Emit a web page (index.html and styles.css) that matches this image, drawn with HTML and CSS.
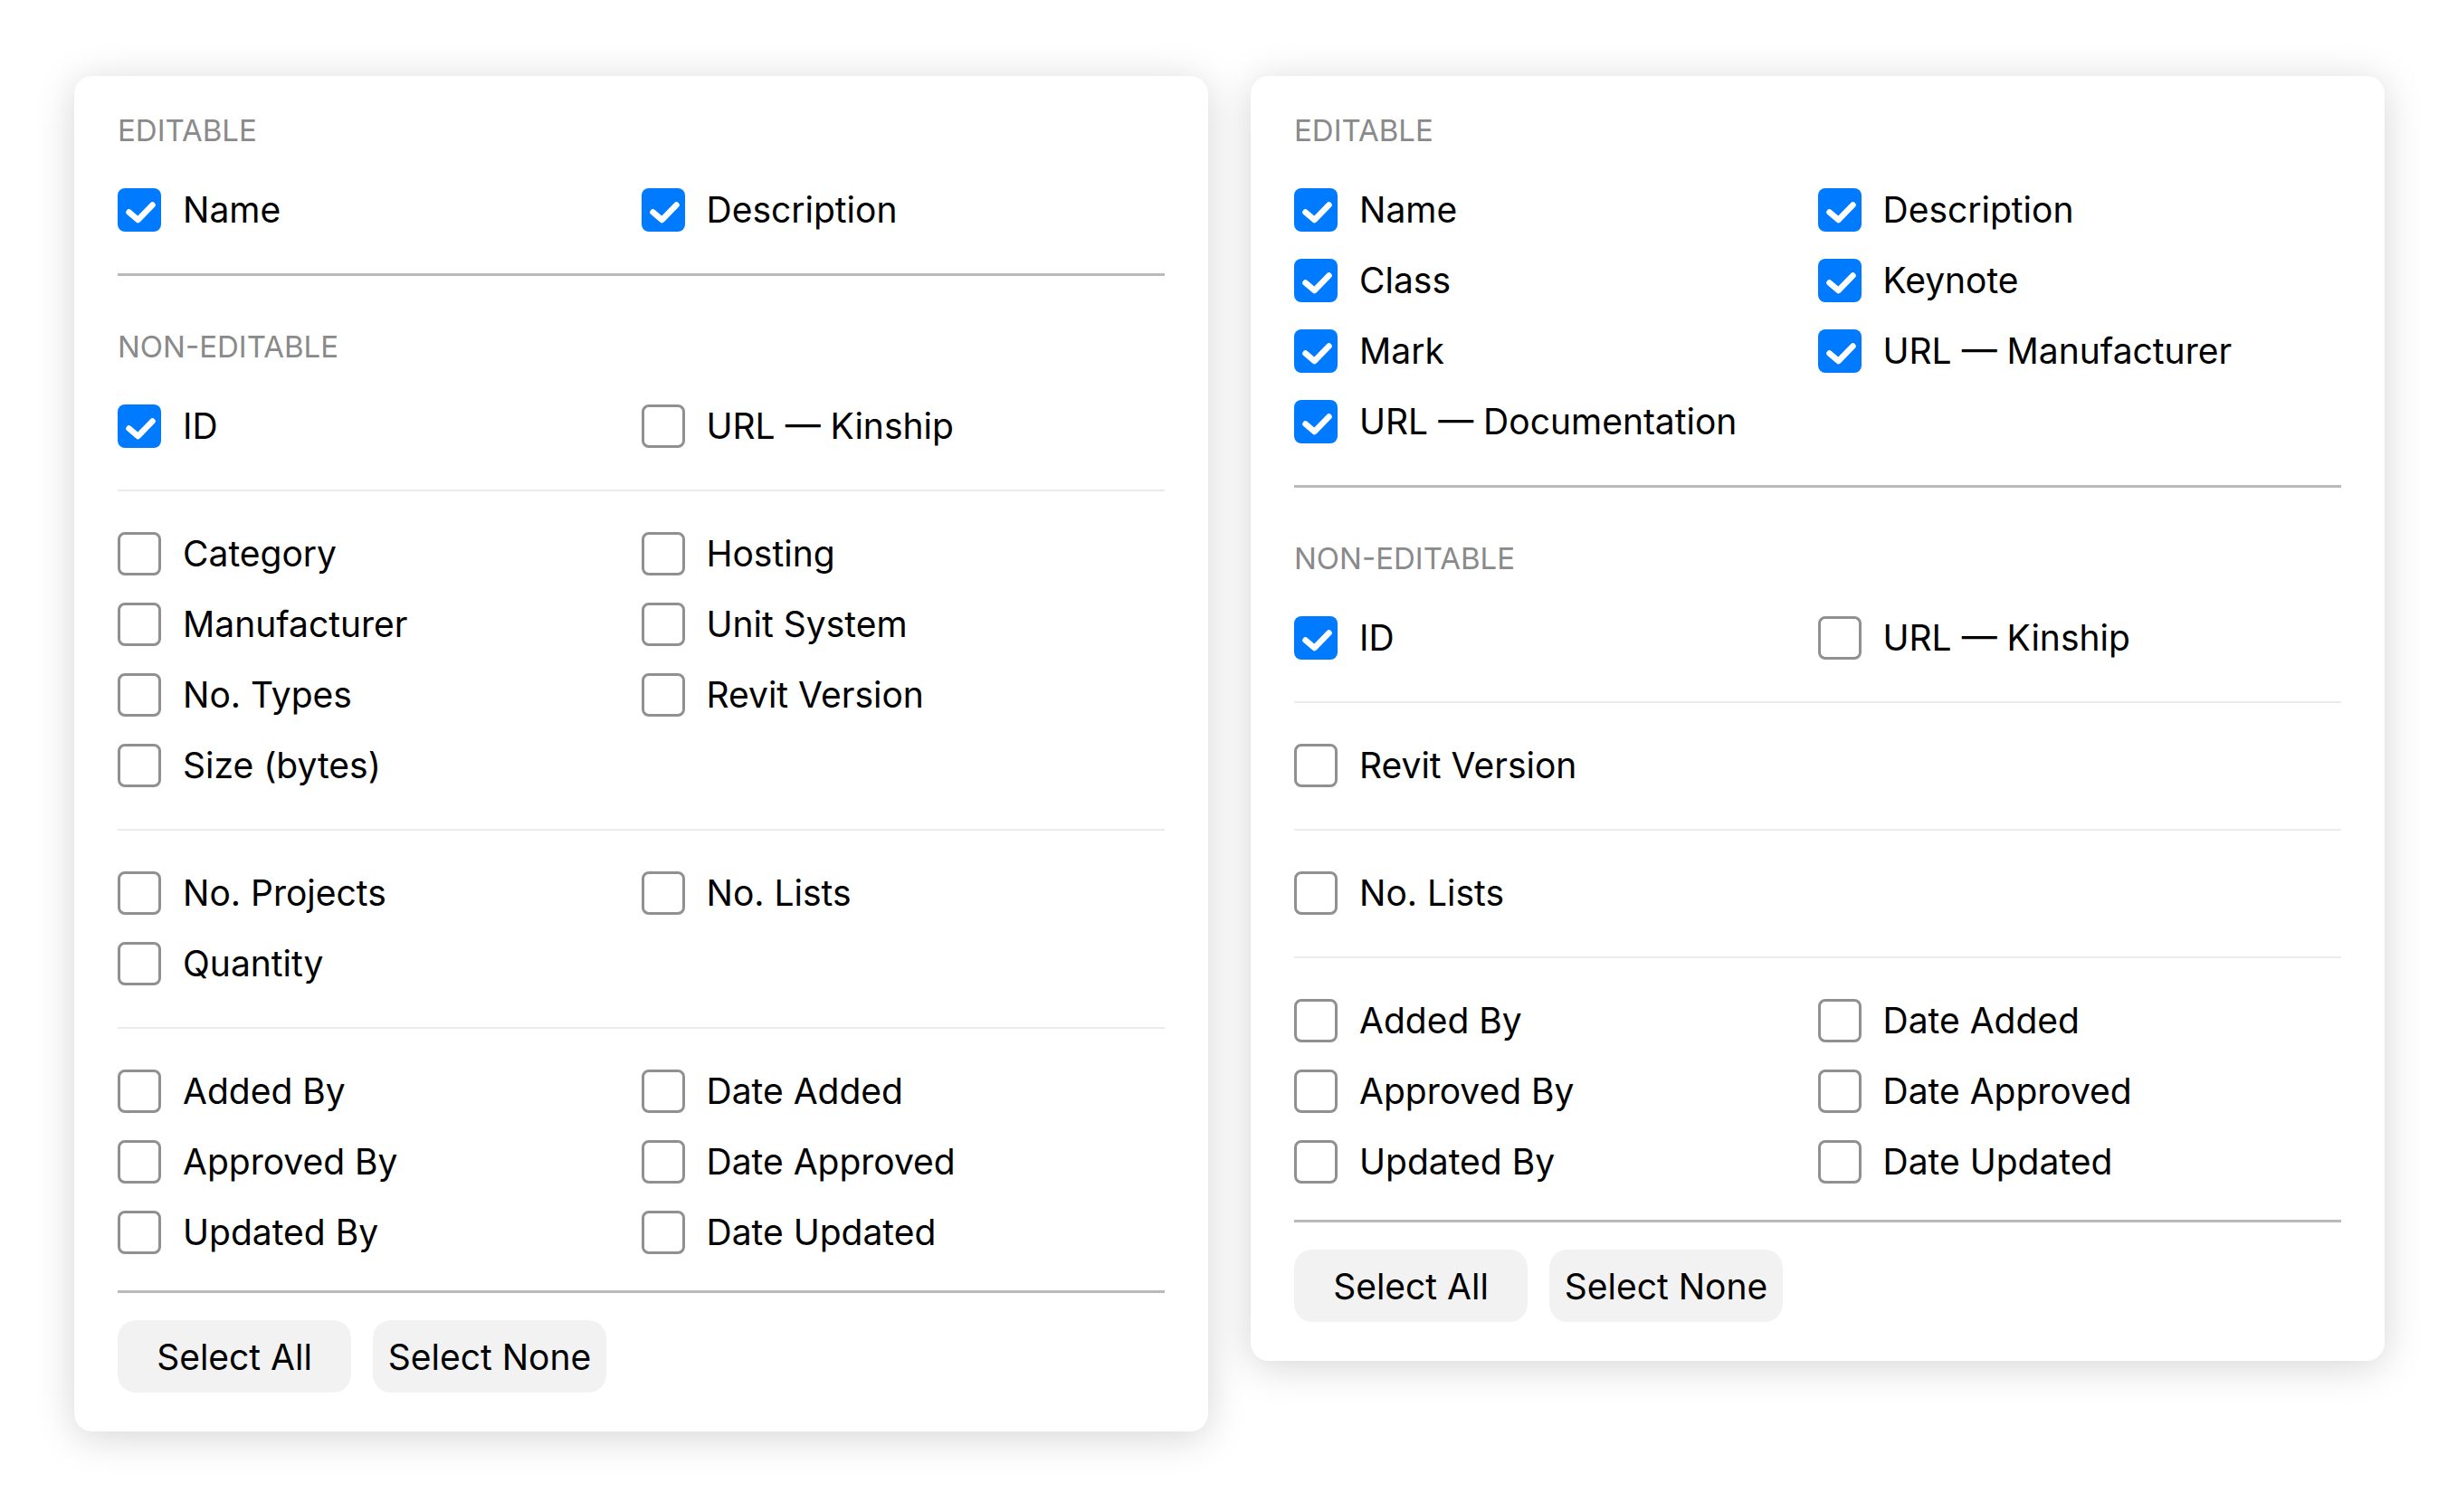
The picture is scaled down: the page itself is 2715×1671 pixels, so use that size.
FILE: index.html
```html
<!DOCTYPE html>
<html lang="en">
<head>
<meta charset="utf-8">
<title>Column chooser</title>
<link rel="stylesheet" href="styles.css">
</head>
<body>
<div class="page">
  <div class="card">
    <div class="section">
      <div class="section-label">EDITABLE</div>
      <div class="group">
        <div class="item"><span class="box checked"><svg viewBox="0 0 48 48"><polyline points="12.5,26.5 22.5,35 38.5,18.5"/></svg></span><span class="text">Name</span></div>
        <div class="item"><span class="box checked"><svg viewBox="0 0 48 48"><polyline points="12.5,26.5 22.5,35 38.5,18.5"/></svg></span><span class="text">Description</span></div>
      </div>
    </div>
    <div class="divider strong"></div>
    <div class="section">
      <div class="section-label">NON-EDITABLE</div>
      <div class="group">
        <div class="item"><span class="box checked"><svg viewBox="0 0 48 48"><polyline points="12.5,26.5 22.5,35 38.5,18.5"/></svg></span><span class="text">ID</span></div>
        <div class="item"><span class="box"></span><span class="text">URL — Kinship</span></div>
      </div>
      <div class="divider light"></div>
      <div class="group">
        <div class="item"><span class="box"></span><span class="text">Category</span></div>
        <div class="item"><span class="box"></span><span class="text">Hosting</span></div>
        <div class="item"><span class="box"></span><span class="text">Manufacturer</span></div>
        <div class="item"><span class="box"></span><span class="text">Unit System</span></div>
        <div class="item"><span class="box"></span><span class="text">No. Types</span></div>
        <div class="item"><span class="box"></span><span class="text">Revit Version</span></div>
        <div class="item"><span class="box"></span><span class="text">Size (bytes)</span></div>
      </div>
      <div class="divider light"></div>
      <div class="group">
        <div class="item"><span class="box"></span><span class="text">No. Projects</span></div>
        <div class="item"><span class="box"></span><span class="text">No. Lists</span></div>
        <div class="item"><span class="box"></span><span class="text">Quantity</span></div>
      </div>
      <div class="divider light"></div>
      <div class="group">
        <div class="item"><span class="box"></span><span class="text">Added By</span></div>
        <div class="item"><span class="box"></span><span class="text">Date Added</span></div>
        <div class="item"><span class="box"></span><span class="text">Approved By</span></div>
        <div class="item"><span class="box"></span><span class="text">Date Approved</span></div>
        <div class="item"><span class="box"></span><span class="text">Updated By</span></div>
        <div class="item"><span class="box"></span><span class="text">Date Updated</span></div>
      </div>
    </div>
    <div class="divider strong last"></div>
    <div class="actions">
      <button class="btn">Select All</button>
      <button class="btn">Select None</button>
    </div>
  </div>

  <div class="card">
    <div class="section">
      <div class="section-label">EDITABLE</div>
      <div class="group">
        <div class="item"><span class="box checked"><svg viewBox="0 0 48 48"><polyline points="12.5,26.5 22.5,35 38.5,18.5"/></svg></span><span class="text">Name</span></div>
        <div class="item"><span class="box checked"><svg viewBox="0 0 48 48"><polyline points="12.5,26.5 22.5,35 38.5,18.5"/></svg></span><span class="text">Description</span></div>
        <div class="item"><span class="box checked"><svg viewBox="0 0 48 48"><polyline points="12.5,26.5 22.5,35 38.5,18.5"/></svg></span><span class="text">Class</span></div>
        <div class="item"><span class="box checked"><svg viewBox="0 0 48 48"><polyline points="12.5,26.5 22.5,35 38.5,18.5"/></svg></span><span class="text">Keynote</span></div>
        <div class="item"><span class="box checked"><svg viewBox="0 0 48 48"><polyline points="12.5,26.5 22.5,35 38.5,18.5"/></svg></span><span class="text">Mark</span></div>
        <div class="item"><span class="box checked"><svg viewBox="0 0 48 48"><polyline points="12.5,26.5 22.5,35 38.5,18.5"/></svg></span><span class="text">URL — Manufacturer</span></div>
        <div class="item"><span class="box checked"><svg viewBox="0 0 48 48"><polyline points="12.5,26.5 22.5,35 38.5,18.5"/></svg></span><span class="text">URL — Documentation</span></div>
      </div>
    </div>
    <div class="divider strong"></div>
    <div class="section">
      <div class="section-label">NON-EDITABLE</div>
      <div class="group">
        <div class="item"><span class="box checked"><svg viewBox="0 0 48 48"><polyline points="12.5,26.5 22.5,35 38.5,18.5"/></svg></span><span class="text">ID</span></div>
        <div class="item"><span class="box"></span><span class="text">URL — Kinship</span></div>
      </div>
      <div class="divider light"></div>
      <div class="group">
        <div class="item"><span class="box"></span><span class="text">Revit Version</span></div>
      </div>
      <div class="divider light"></div>
      <div class="group">
        <div class="item"><span class="box"></span><span class="text">No. Lists</span></div>
      </div>
      <div class="divider light"></div>
      <div class="group">
        <div class="item"><span class="box"></span><span class="text">Added By</span></div>
        <div class="item"><span class="box"></span><span class="text">Date Added</span></div>
        <div class="item"><span class="box"></span><span class="text">Approved By</span></div>
        <div class="item"><span class="box"></span><span class="text">Date Approved</span></div>
        <div class="item"><span class="box"></span><span class="text">Updated By</span></div>
        <div class="item"><span class="box"></span><span class="text">Date Updated</span></div>
      </div>
    </div>
    <div class="divider strong last"></div>
    <div class="actions">
      <button class="btn">Select All</button>
      <button class="btn">Select None</button>
    </div>
  </div>
</div>
</body>
</html>
```

FILE: styles.css
```css
* {
  box-sizing: border-box;
}

html, body {
  margin: 0;
  background: #ffffff;
}

body {
  font-family: Inter, "Noto Sans", "Liberation Sans", sans-serif;
  color: #000000;
}

.page {
  display: flex;
  align-items: flex-start;
  gap: 47px;
  padding: 84px 80px 90px 82px;
}

.card {
  width: 1253px;
  flex: none;
  background: #ffffff;
  border-radius: 20px;
  box-shadow: 0 6px 44px rgba(0, 0, 0, 0.17);
  padding: 40px 48px 43px;
}

.section-label {
  font-size: 33px;
  line-height: 40px;
  color: #8a8a8a;
  margin-bottom: 44px;
}

.divider.strong + .section .section-label {
  margin-top: 58px;
}

.group {
  display: grid;
  grid-template-columns: 1fr 1fr;
  row-gap: 30px;
}

.item {
  display: flex;
  align-items: center;
  gap: 24px;
  height: 48px;
}

.box {
  flex: none;
  width: 48px;
  height: 48px;
  border-radius: 8px;
  border: 3px solid #909090;
  background: #ffffff;
  display: flex;
  align-items: center;
  justify-content: center;
}

.box.checked {
  border: none;
  background: #007aff;
}

.box svg {
  width: 48px;
  height: 48px;
  display: block;
}

.box svg polyline {
  fill: none;
  stroke: #ffffff;
  stroke-width: 6.5;
  stroke-linecap: round;
  stroke-linejoin: round;
}

.text {
  font-size: 39px;
  line-height: 48px;
  white-space: nowrap;
}

.divider {
  margin: 46px 0;
}

.divider.strong {
  height: 3px;
  background: #bababa;
}

.divider.light {
  height: 2px;
  background: #ebebeb;
  margin: 46px 0 45px;
}

.divider.strong.last {
  margin: 40px 0 30px;
}

.actions {
  display: flex;
  gap: 24px;
}

.btn {
  font-family: inherit;
  font-size: 39px;
  color: #000000;
  width: 258px;
  height: 80px;
  padding: 0;
  border: none;
  border-radius: 20px;
  background: #f2f2f2;
  text-align: center;
}
```
